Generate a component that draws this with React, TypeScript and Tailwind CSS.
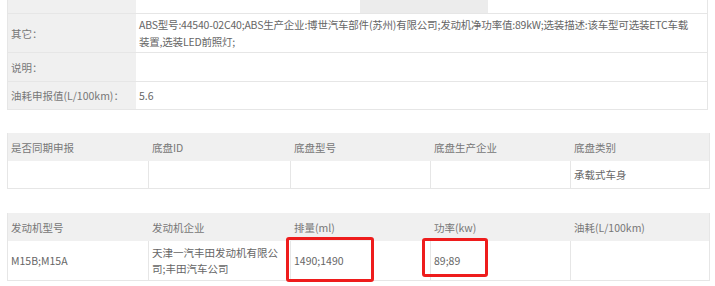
const font = {
  fontFamily: '"Microsoft YaHei", "Noto Sans CJK SC", "Noto Sans", sans-serif',
};

function InfoRow({
  label,
  children,
  h,
}: {
  label: string;
  children?: React.ReactNode;
  h: string;
}) {
  return (
    <div className={`flex border-b border-[#e6e6e6] ${h}`}>
      <div className="flex w-[128px] shrink-0 items-center bg-[#f0f0f0] pl-[3px]">
        {label}
      </div>
      <div className="flex flex-1 items-center pl-[3px] text-[#666]">
        {children}
      </div>
    </div>
  );
}

function Grid({
  head,
  row,
  rowH,
}: {
  head: string[];
  row: React.ReactNode[];
  rowH: string;
}) {
  return (
    <div className="ml-[7px] w-[703px] border border-t-0 border-[#e6e6e6]">
      <div className="grid h-[28px] grid-cols-[141px_142px_140px_140px_1fr] bg-[#f0f0f0]">
        {head.map((h) => (
          <div key={h} className="flex items-center pl-[3px]">
            {h}
          </div>
        ))}
      </div>
      <div className={`grid grid-cols-[141px_142px_140px_140px_1fr] ${rowH}`}>
        {row.map((c, i) => (
          <div
            key={i}
            className={`flex items-center pl-[3px] text-[#666] ${
              i < 4 ? "border-r border-[#e6e6e6]" : ""
            }`}
          >
            {c}
          </div>
        ))}
      </div>
    </div>
  );
}

export default function App() {
  return (
    <div
      className="relative h-[286px] w-[715px] overflow-hidden bg-white text-[10.5px] leading-[17px] text-[#777]"
      style={font}
    >
      <div className="ml-[7px] w-[701px] border-x border-[#e6e6e6]">
        <div className="flex h-[14px] border-b border-[#e6e6e6]">
          <div className="w-[128px] bg-[#f0f0f0]" />
          <div className="ml-[224px] h-[13px] w-[128px] bg-[#ececec]" />
        </div>
        <InfoRow label="其它：" h="h-[39px]">
          <span className="whitespace-nowrap tracking-[-0.2px]">
            ABS型号:44540-02C40;ABS生产企业:博世汽车部件(苏州)有限公司;发动机净功率值:89kW;选装描述:该车型可选装ETC车载
            <br />
            装置,选装LED前照灯;
          </span>
        </InfoRow>
        <InfoRow label="说明：" h="h-[29px]" />
        <InfoRow label="油耗申报值(L/100km)：" h="h-[28px]">
          5.6
        </InfoRow>
      </div>

      <div className="mt-[23px]">
        <Grid
          head={["是否同期申报", "底盘ID", "底盘型号", "底盘生产企业", "底盘类别"]}
          row={["", "", "", "", "承载式车身"]}
          rowH="h-[27px]"
        />
      </div>

      <div className="mt-[24px]">
        <Grid
          head={["发动机型号", "发动机企业", "排量(ml)", "功率(kw)", "油耗(L/100km)"]}
          row={[
            "M15B;M15A",
            <span className="leading-[16px]">
              天津一汽丰田发动机有限公
              <br />
              司;丰田汽车公司
            </span>,
            "1490;1490",
            "89;89",
            "",
          ]}
          rowH="h-[39px]"
        />
      </div>

      <div className="absolute left-[286px] top-[237px] h-[45px] w-[88px] rounded-[3px] border-[3px] border-[#ee1c1c]" />
      <div className="absolute left-[422px] top-[238px] h-[39px] w-[66px] rounded-[3px] border-[3px] border-[#ee1c1c]" />
    </div>
  );
}
